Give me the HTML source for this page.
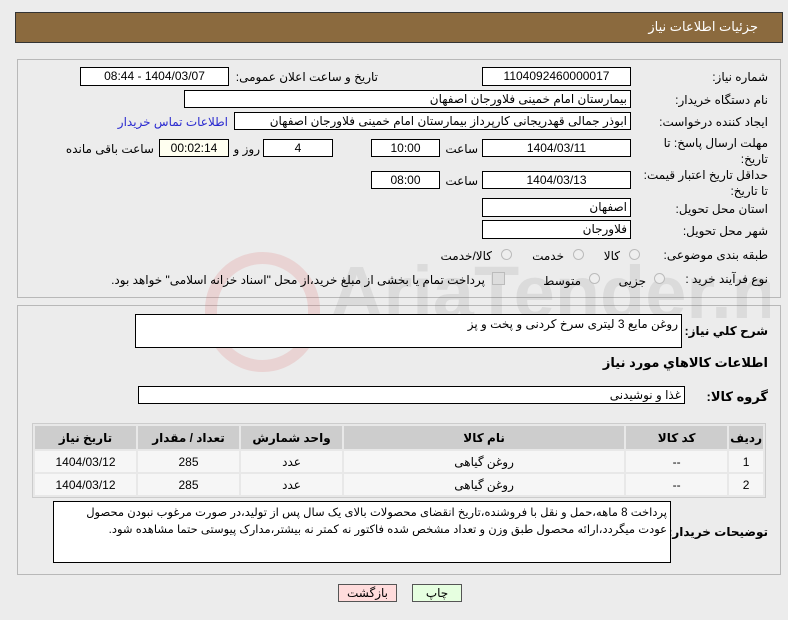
<!DOCTYPE html>
<html><head><meta charset="utf-8"><style>
body{margin:0;width:788px;height:620px;background:#ececec;font-family:"Liberation Sans","DejaVu Sans",sans-serif;font-size:12px;color:#000;position:relative;overflow:hidden}
.a{position:absolute}
.box{position:absolute;background:#fff;border:1px solid #000;box-sizing:border-box;direction:rtl;text-align:center;line-height:16px;font-size:12px}
.lbl{position:absolute;direction:rtl;text-align:right;white-space:nowrap;font-size:12px}
.panel{position:absolute;border:1px solid #b8b8b8;box-sizing:border-box}
table{border-collapse:separate;border-spacing:2px;position:absolute;left:32px;top:423px;width:734px;background:#e8e8e8;border:1px solid #ccc;direction:rtl;font-size:12px}
th{background:#cdcdcd;height:21px;font-weight:bold}
td{background:#f6f6f6;height:19px;text-align:center}
.rad{position:absolute;width:11px;height:11px;border-radius:50%;border:1px solid #bbb;background:#eee;box-sizing:border-box}
</style></head><body>
<div class="a" style="left:15px;top:12px;width:768px;height:31px;background:#8b6a3e;border:1px solid #333;box-sizing:border-box"></div>
<div class="lbl" style="right:30px;top:19px;color:#fff;font-size:13px">جزئیات اطلاعات نیاز</div>
<div class="panel" style="left:17px;top:59px;width:764px;height:239px"></div>
<div class="panel" style="left:17px;top:305px;width:764px;height:270px"></div>
<div class="a" style="left:330px;top:250px;width:440px;height:120px;opacity:.12;font-size:74px;font-weight:bold;color:#666;direction:ltr;white-space:nowrap;overflow:hidden">AriaTender.net</div>
<div class="a" style="left:205px;top:252px;width:115px;height:120px;border:12px solid #d66;border-radius:58px;box-sizing:border-box;opacity:.18"></div>

<div class="lbl" style="right:20px;top:70px">شماره نیاز:</div>
<div class="box" style="left:482px;top:67px;width:149px;height:19px">1104092460000017</div>
<div class="lbl" style="right:410px;top:70px">تاریخ و ساعت اعلان عمومی:</div>
<div class="box" style="left:80px;top:67px;width:149px;height:19px">1404/03/07 - 08:44</div>

<div class="lbl" style="right:20px;top:93px">نام دستگاه خریدار:</div>
<div class="box" style="left:184px;top:90px;width:447px;height:18px;text-align:right;padding-right:3px">بیمارستان امام خمینی فلاورجان اصفهان</div>

<div class="lbl" style="right:20px;top:115px">ایجاد کننده درخواست:</div>
<div class="box" style="left:234px;top:112px;width:397px;height:18px;text-align:right;padding-right:3px">ابوذر جمالی قهدریجانی کارپرداز بیمارستان امام خمینی فلاورجان اصفهان</div>
<div class="lbl" style="right:560px;top:115px;color:#2a2ad0">اطلاعات تماس خریدار</div>

<div class="lbl" style="right:20px;top:135px;line-height:16px;text-align:right">مهلت ارسال پاسخ: تا<br>تاریخ:</div>
<div class="box" style="left:482px;top:139px;width:149px;height:18px">1404/03/11</div>
<div class="lbl" style="right:310px;top:142px">ساعت</div>
<div class="box" style="left:371px;top:139px;width:69px;height:18px">10:00</div>
<div class="box" style="left:263px;top:139px;width:70px;height:18px">4</div>
<div class="lbl" style="right:528px;top:142px">روز و</div>
<div class="box" style="left:159px;top:139px;width:70px;height:18px;background:#fffff0">00:02:14</div>
<div class="lbl" style="right:634px;top:142px">ساعت باقی مانده</div>

<div class="lbl" style="right:20px;top:167px;line-height:16px">حداقل تاریخ اعتبار قیمت:<br>تا تاریخ:</div>
<div class="box" style="left:482px;top:171px;width:149px;height:18px">1404/03/13</div>
<div class="lbl" style="right:310px;top:174px">ساعت</div>
<div class="box" style="left:371px;top:171px;width:69px;height:18px">08:00</div>

<div class="lbl" style="right:20px;top:202px">استان محل تحویل:</div>
<div class="box" style="left:482px;top:198px;width:149px;height:19px;text-align:right;padding-right:3px">اصفهان</div>
<div class="lbl" style="right:20px;top:224px">شهر محل تحویل:</div>
<div class="box" style="left:482px;top:220px;width:149px;height:19px;text-align:right;padding-right:3px">فلاورجان</div>

<div class="lbl" style="right:20px;top:248px">طبقه بندی موضوعی:</div>
<div class="rad" style="left:629px;top:249px"></div><div class="lbl" style="right:168px;top:249px">کالا</div>
<div class="rad" style="left:573px;top:249px"></div><div class="lbl" style="right:224px;top:249px">خدمت</div>
<div class="rad" style="left:501px;top:249px"></div><div class="lbl" style="right:296px;top:249px">کالا/خدمت</div>

<div class="lbl" style="right:20px;top:272px">نوع فرآیند خرید :</div>
<div class="rad" style="left:654px;top:273px"></div><div class="lbl" style="right:142px;top:274px">جزیی</div>
<div class="rad" style="left:589px;top:273px"></div><div class="lbl" style="right:207px;top:274px">متوسط</div>
<div class="a" style="left:492px;top:272px;width:11px;height:11px;background:#ddd;border:1px solid #bbb"></div>
<div class="lbl" style="right:303px;top:273px">پرداخت تمام یا بخشی از مبلغ خرید،از محل "اسناد خزانه اسلامی" خواهد بود.</div>

<div class="lbl" style="right:20px;top:324px;font-weight:bold">شرح کلي نياز:</div>
<div class="box" style="left:135px;top:314px;width:547px;height:34px;text-align:right;padding-right:3px;line-height:18px">روغن مایع 3 لیتری سرخ کردنی و پخت و پز</div>
<div class="lbl" style="right:20px;top:355px;font-weight:bold;font-size:13px">اطلاعات کالاهاي مورد نياز</div>
<div class="lbl" style="right:20px;top:389px;font-weight:bold;font-size:13px">گروه کالا:</div>
<div class="box" style="left:138px;top:386px;width:547px;height:18px;text-align:right;padding-right:3px">غذا و نوشیدنی</div>

<table>
<tr><th style="width:26px">ردیف</th><th style="width:99px">کد کالا</th><th>نام کالا</th><th style="width:99px">واحد شمارش</th><th style="width:99px">تعداد / مقدار</th><th style="width:99px">تاریخ نیاز</th></tr>
<tr><td>1</td><td>--</td><td>روغن گیاهی</td><td>عدد</td><td>285</td><td>1404/03/12</td></tr>
<tr><td>2</td><td>--</td><td>روغن گیاهی</td><td>عدد</td><td>285</td><td>1404/03/12</td></tr>
</table>

<div class="lbl" style="right:20px;top:525px;font-weight:bold">توضیحات خریدار:</div>
<div class="box" style="left:53px;top:501px;width:618px;height:62px;text-align:right;padding:3px 3px;line-height:17px;font-size:11.5px">پرداخت 8 ماهه،حمل و نقل با فروشنده،تاریخ انقضای محصولات بالای یک سال پس از تولید،در صورت مرغوب نبودن محصول عودت میگردد،ارائه محصول طبق وزن و تعداد مشخص شده فاکتور نه کمتر نه بیشتر،مدارک پیوستی حتما مشاهده شود.</div>

<div class="box" style="left:338px;top:584px;width:59px;height:18px;background:#ffdcdc;border-color:#555">بازگشت</div>
<div class="box" style="left:412px;top:584px;width:50px;height:18px;background:#e6ffe0;border-color:#555">چاپ</div>
</body></html>
